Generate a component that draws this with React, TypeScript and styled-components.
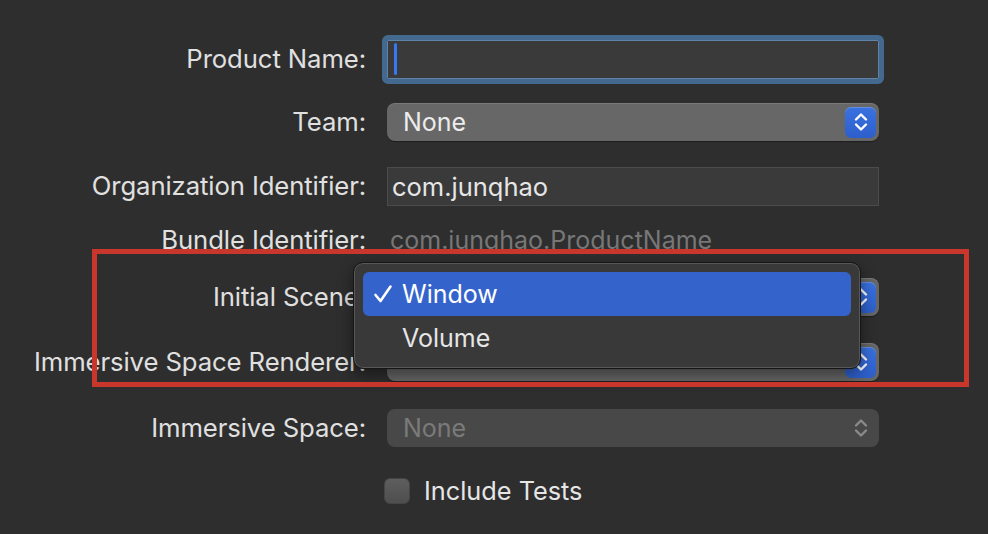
import React from "react";
import styled, { createGlobalStyle } from "styled-components";

const Global = createGlobalStyle`
  html, body { margin: 0; padding: 0; background: #2e2e2e; }
  body { width: 988px; height: 534px; overflow: hidden; font-family: Inter, "Noto Sans", sans-serif; }
`;

const Page = styled.div`
  position: relative;
  width: 988px;
  height: 534px;
  background: #2e2e2e;
  padding-top: 39px;
  box-sizing: border-box;
`;

const Row = styled.div<{ $mt: number }>`
  display: grid;
  grid-template-columns: 366px 492px;
  column-gap: 21px;
  align-items: center;
  height: 40px;
  margin-top: ${(p) => p.$mt}px;
`;

const Label = styled.div`
  text-align: right;
  font-size: 25.7px;
  color: #e0e0e0;
  white-space: nowrap;
  letter-spacing: -0.1px;
  margin-top: -1px;
`;

const TextField = styled.div<{ $focused?: boolean }>`
  height: 39px;
  box-sizing: border-box;
  background: #3a3a3a;
  border: 1px solid ${(p) => (p.$focused ? "#5e82a8" : "#4b4b4b")};
  border-radius: ${(p) => (p.$focused ? "1px" : "0")};
  outline: ${(p) => (p.$focused ? "5px solid #44698f" : "none")};
  display: flex;
  align-items: center;
  padding-left: ${(p) => (p.$focused ? "6px" : "4px")};
  font-size: 25.5px;
  color: #e6e6e6;
`;

const Caret = styled.div`
  width: 3px;
  height: 32px;
  border-radius: 2px;
  background: #3478f6;
`;

const Plain = styled.div`
  font-size: 25px;
  color: #777;
  padding-left: 3px;
  white-space: nowrap;
`;

const Popup = styled.div<{ $disabled?: boolean }>`
  height: 38px;
  box-sizing: border-box;
  border-radius: 8px;
  background: ${(p) => (p.$disabled ? "#484848" : "#676767")};
  box-shadow: ${(p) => (p.$disabled ? "none" : "inset 0 1px 0 rgba(255,255,255,0.12), 0 1px 1px rgba(0,0,0,0.35)")};
  display: flex;
  align-items: center;
  justify-content: space-between;
  padding: 0 3px 0 16px;
  font-size: 25px;
  color: ${(p) => (p.$disabled ? "#7a7a7a" : "#ececec")};
`;

const Stepper = styled.div<{ $disabled?: boolean }>`
  width: 31px;
  height: 31px;
  border-radius: 6px;
  background: ${(p) => (p.$disabled ? "transparent" : "linear-gradient(#3a72e0, #2d5fcb)")};
  box-shadow: ${(p) => (p.$disabled ? "none" : "inset 0 1px 0 rgba(255,255,255,0.2)")};
  display: flex;
  align-items: center;
  justify-content: center;
`;

const CheckRow = styled.div`
  display: flex;
  align-items: center;
  gap: 14px;
  grid-column: 2;
  margin-left: -3px;
`;

const Box = styled.div`
  width: 26px;
  height: 26px;
  box-sizing: border-box;
  border-radius: 6px;
  background: linear-gradient(#5e5e5e, #4e4e4e);
  border: 1px solid #454545;
`;

const CheckLabel = styled.div`
  font-size: 25.3px;
  color: #e6e6e6;
  margin-top: -1px;
`;

const Menu = styled.div`
  position: absolute;
  left: 353px;
  top: 262px;
  width: 508px;
  height: 107px;
  box-sizing: border-box;
  border-radius: 10px;
  background: #393939;
  border: 1px solid #151515;
  box-shadow: inset 0 0 0 1px rgba(255,255,255,0.16), 0 6px 16px rgba(0,0,0,0.45);
  padding: 9px 9px 8px 9px;
  display: flex;
  flex-direction: column;
  z-index: 2;
`;

const MenuItem = styled.div<{ $selected?: boolean }>`
  height: 44px;
  border-radius: 6px;
  background: ${(p) => (p.$selected ? "#3563cc" : "transparent")};
  display: flex;
  align-items: center;
  padding-left: 10px;
  font-size: 25px;
  color: ${(p) => (p.$selected ? "#ffffff" : "#e6e6e6")};
`;

const CheckSlot = styled.div`
  width: 29px;
  display: flex;
  align-items: center;
`;

const Annotation = styled.div`
  position: absolute;
  left: 92px;
  top: 249px;
  width: 877px;
  height: 138px;
  box-sizing: border-box;
  border: 5px solid #c9372c;
  z-index: 3;
  pointer-events: none;
`;

const Chevrons = ({ color }: { color: string }) => (
  <svg width="16" height="24" viewBox="0 0 16 24" fill="none">
    <path d="M3 9.5 L8 4.5 L13 9.5" stroke={color} strokeWidth="2.4" strokeLinecap="round" strokeLinejoin="round" />
    <path d="M3 14.5 L8 19.5 L13 14.5" stroke={color} strokeWidth="2.4" strokeLinecap="round" strokeLinejoin="round" />
  </svg>
);

const CheckMark = () => (
  <svg width="20" height="20" viewBox="0 0 20 20" fill="none">
    <path d="M2.5 11 L7.5 17 L17.5 2.5" stroke="#ffffff" strokeWidth="2.6" strokeLinecap="round" strokeLinejoin="round" />
  </svg>
);

const PopupButton = ({ value, disabled }: { value: string; disabled?: boolean }) => (
  <Popup $disabled={disabled}>
    <span>{value}</span>
    <Stepper $disabled={disabled}>
      <Chevrons color={disabled ? "#8a8a8a" : "#ffffff"} />
    </Stepper>
  </Popup>
);

export default function App() {
  return (
    <Page>
      <Global />
      <Row $mt={0}>
        <Label>Product Name:</Label>
        <TextField $focused>
          <Caret />
        </TextField>
      </Row>
      <Row $mt={23}>
        <Label>Team:</Label>
        <PopupButton value="None" />
      </Row>
      <Row $mt={24}>
        <Label>Organization Identifier:</Label>
        <TextField>com.junqhao</TextField>
      </Row>
      <Row $mt={14}>
        <Label>Bundle Identifier:</Label>
        <Plain>com.junqhao.ProductName</Plain>
      </Row>
      <Row $mt={17}>
        <Label>Initial Scene:</Label>
        <PopupButton value="" />
      </Row>
      <Row $mt={25}>
        <Label>Immersive Space Renderer:</Label>
        <PopupButton value="" />
      </Row>
      <Row $mt={26}>
        <Label>Immersive Space:</Label>
        <PopupButton value="None" disabled />
      </Row>
      <Row $mt={23}>
        <CheckRow>
          <Box />
          <CheckLabel>Include Tests</CheckLabel>
        </CheckRow>
      </Row>

      <Menu>
        <MenuItem $selected>
          <CheckSlot>
            <CheckMark />
          </CheckSlot>
          Window
        </MenuItem>
        <MenuItem>
          <CheckSlot />
          Volume
        </MenuItem>
      </Menu>
      <Annotation />
    </Page>
  );
}
